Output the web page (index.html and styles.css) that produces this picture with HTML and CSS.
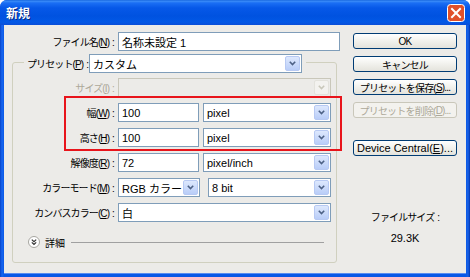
FILE: index.html
```html
<!doctype html>
<html>
  <head>
    <meta charset="utf-8">
    <title>新規</title>
    <link rel="stylesheet" href="styles.css">
  </head>
  <body>
    <div class="window">
      <div class="titlebar">
        <span class="title">新規</span>
        <span class="close">
          <svg width="18" height="18" viewBox="0 0 18 18">
            <rect x="0.5" y="0.5" width="17" height="17" rx="3" fill="#e0502a" stroke="#fff"/>
            <path d="M5 5l8 8M13 5l-8 8" stroke="#fff" stroke-width="2" stroke-linecap="square"/>
          </svg>
        </span>
      </div>
      <div class="client">
        <div class="form">
          <div class="row">
            <span class="label">ファイル名(<u>N</u>)<span class="colon">:</span></span>
            <div class="field w-name">名称未設定 1</div>
          </div>
          <div class="group">
            <div class="group-head">
              <span class="head-label">プリセット(<u>P</u>)<span class="colon">:</span></span>
              <div class="combo w-preset"><span class="value">カスタム</span><span class="arrow"><svg width="7" height="5" viewBox="0 0 7 5"><path d="M0.8 0.8l2.7 2.7 2.7-2.7" fill="none" stroke="#4d6185" stroke-width="1.6"/></svg></span></div>
            </div>
            <div class="row first">
              <span class="label disabled">サイズ(<u>I</u>)<span class="colon">:</span></span>
              <div class="combo combo-off w-full"><span class="value"></span><span class="arrow"><svg width="7" height="5" viewBox="0 0 7 5"><path d="M0.8 0.8l2.7 2.7 2.7-2.7" fill="none" stroke="#c9c7ba" stroke-width="1.6"/></svg></span></div>
            </div>
            <div class="row">
              <span class="label">幅(<u>W</u>)<span class="colon">:</span></span>
              <div class="field w-num">100</div>
              <div class="combo w-unit"><span class="value">pixel</span><span class="arrow"><svg width="7" height="5" viewBox="0 0 7 5"><path d="M0.8 0.8l2.7 2.7 2.7-2.7" fill="none" stroke="#4d6185" stroke-width="1.6"/></svg></span></div>
            </div>
            <div class="row">
              <span class="label">高さ(<u>H</u>)<span class="colon">:</span></span>
              <div class="field w-num">100</div>
              <div class="combo w-unit"><span class="value">pixel</span><span class="arrow"><svg width="7" height="5" viewBox="0 0 7 5"><path d="M0.8 0.8l2.7 2.7 2.7-2.7" fill="none" stroke="#4d6185" stroke-width="1.6"/></svg></span></div>
            </div>
            <div class="row">
              <span class="label">解像度(<u>R</u>)<span class="colon">:</span></span>
              <div class="field w-num">72</div>
              <div class="combo w-unit"><span class="value">pixel/inch</span><span class="arrow"><svg width="7" height="5" viewBox="0 0 7 5"><path d="M0.8 0.8l2.7 2.7 2.7-2.7" fill="none" stroke="#4d6185" stroke-width="1.6"/></svg></span></div>
            </div>
            <div class="row">
              <span class="label">カラーモード(<u>M</u>)<span class="colon">:</span></span>
              <div class="combo w-mode"><span class="value">RGB カラー</span><span class="arrow"><svg width="7" height="5" viewBox="0 0 7 5"><path d="M0.8 0.8l2.7 2.7 2.7-2.7" fill="none" stroke="#4d6185" stroke-width="1.6"/></svg></span></div>
              <div class="combo w-bit"><span class="value">8 bit</span><span class="arrow"><svg width="7" height="5" viewBox="0 0 7 5"><path d="M0.8 0.8l2.7 2.7 2.7-2.7" fill="none" stroke="#4d6185" stroke-width="1.6"/></svg></span></div>
            </div>
            <div class="row">
              <span class="label">カンバスカラー(<u>C</u>)<span class="colon">:</span></span>
              <div class="combo w-full"><span class="value">白</span><span class="arrow"><svg width="7" height="5" viewBox="0 0 7 5"><path d="M0.8 0.8l2.7 2.7 2.7-2.7" fill="none" stroke="#4d6185" stroke-width="1.6"/></svg></span></div>
            </div>
            <div class="detail">
              <svg class="toggle" width="12" height="12" viewBox="0 0 12 12">
                <circle cx="6" cy="6" r="5.5" fill="#fff" stroke="#a7a6a0"/>
                <path d="M3.8 3.6l2.2 2 2.2-2M3.8 6.4l2.2 2 2.2-2" fill="none" stroke="#333" stroke-width="1.2"/>
              </svg>
              <span class="detail-text">詳細</span>
              <span class="rule"></span>
            </div>
          </div>
        </div>
        <div class="side">
          <div class="btn">OK</div>
          <div class="btn">キャンセル</div>
          <div class="btn">プリセットを保存(<u>S</u>)...</div>
          <div class="btn btn-off">プリセットを削除(<u>D</u>)...</div>
          <div class="btn btn-dc">Device Central(<u>E</u>)...</div>
          <div class="size-label">ファイルサイズ<span class="colon">:</span></div>
          <div class="size-value">29.3K</div>
        </div>
      </div>
      <div class="highlight"></div>
    </div>
  </body>
</html>
```

FILE: styles.css
```css
html, body {
  margin: 0;
}
body {
  width: 470px;
  height: 277px;
  overflow: hidden;
  font: 11px "Liberation Sans", "Noto Sans CJK JP", sans-serif;
  color: #000;
}
u {
  text-decoration: underline;
  text-underline-offset: 1px;
}
.window {
  position: relative;
  width: 470px;
  height: 277px;
  display: flex;
  flex-direction: column;
  background: linear-gradient(to right, #0842c8, #1766f0 2px, #0a58e6 4px, #0a58e6 466px, #1a62e6 468px, #0034b0);
  border-radius: 7px 7px 0 0;
  overflow: hidden;
}
.titlebar {
  height: 25px;
  flex: none;
  display: flex;
  align-items: center;
  justify-content: space-between;
  padding: 0 5px 0 6px;
  background: linear-gradient(#0a5ad8 0, #3d8ef8 1px, #1a6ef4 3px, #0658e8 8px, #0052e0 16px, #0258e6 22px, #0a4ed8 25px);
}
.title {
  color: #fff;
  font: bold 12px "Noto Sans CJK JP", sans-serif;
  text-shadow: 1px 1px #0a2a80;
}
.close {
  display: flex;
}
.client {
  flex: 1;
  display: flex;
  margin: 0 4px 4px;
  padding-top: 7px;
  background: #ecebe8;
  box-shadow: 0 1px #5a8cf0;
}
.form {
  width: 341px;
}
.row {
  display: flex;
  align-items: center;
  height: 19px;
  margin-top: 6px;
}
.form > .row {
  margin-top: 0;
}
.label, .head-label, .detail-text, .size-label {
  font-size: 10px;
  letter-spacing: -0.9px;
  white-space: nowrap;
}
.colon {
  margin-left: 3px;
}
.label {
  width: 114px;
  box-sizing: border-box;
  padding-right: 4px;
  text-align: right;
}
.group .label {
  width: 105px;
}
.disabled {
  color: #aca899;
}
.field, .combo {
  height: 19px;
  box-sizing: border-box;
  border: 1px solid #7f9db9;
  background: #fff;
  display: flex;
  align-items: center;
  padding-left: 3px;
  white-space: nowrap;
}
.combo {
  padding: 1px 1px 1px 3px;
  align-items: stretch;
}
.combo .value {
  flex: 1;
  display: flex;
  align-items: center;
}
.combo .arrow {
  width: 13px;
  display: flex;
  align-items: center;
  justify-content: center;
  border: 1px solid #b7c9f3;
  border-radius: 2px;
  background: linear-gradient(#dde8fd, #b9cdf8);
}
.combo-off {
  background: #ecebe8;
  border-color: #c9c7ba;
}
.combo-off .arrow {
  background: #f3f2ef;
  border-color: #e3e2dc;
}
.w-name {
  width: 222px;
}
.w-preset {
  width: 213px;
  margin-left: 3px;
}
.w-full {
  width: 213px;
}
.w-num {
  width: 81px;
}
.w-unit {
  width: 128px;
  margin-left: 4px;
}
.w-mode {
  width: 82px;
}
.w-bit {
  width: 123px;
  margin-left: 8px;
}
.group {
  width: 325px;
  height: 201px;
  box-sizing: border-box;
  margin: 11px 0 0 8px;
  border: 1px solid #d0d0bf;
  border-radius: 3px;
}
.group-head {
  display: flex;
  align-items: center;
  width: fit-content;
  height: 19px;
  margin: -9px 0 0 11px;
  padding: 0 4px 0 3px;
  background: #ecebe8;
}
.head-label {
  width: 59px;
}
.group .first {
  margin-top: 5px;
}
.detail {
  display: flex;
  align-items: center;
  height: 18px;
  margin-top: 11px;
  padding: 0 12px 0 15px;
}
.detail-text {
  margin-left: 5px;
  letter-spacing: 0;
}
.rule {
  flex: 1;
  height: 1px;
  margin-left: 6px;
  background: #a0a0a0;
}
.side {
  width: 104px;
  margin-left: 8px;
  padding-top: 1px;
  display: flex;
  flex-direction: column;
}
.btn {
  height: 16px;
  box-sizing: border-box;
  margin-bottom: 7px;
  border: 1px solid #003c74;
  border-radius: 3px;
  background: linear-gradient(#fff, #f4f4f0 40%, #e4e3dc);
  display: flex;
  align-items: center;
  justify-content: center;
  white-space: nowrap;
  font-size: 10px;
  letter-spacing: -0.8px;
}
.btn-off {
  color: #aca899;
  border-color: #c9c7ba;
  background: #f3f2ee;
}
.btn-dc {
  margin-top: 15px;
  font-size: 11px;
  letter-spacing: 0;
}
.size-label, .size-value {
  text-align: center;
  line-height: 14px;
}
.size-label {
  margin-top: 48px;
}
.size-value {
  margin-top: 6px;
}
.highlight {
  position: absolute;
  left: 64px;
  top: 96px;
  width: 278px;
  height: 55px;
  box-sizing: border-box;
  border: 2px solid #e8141b;
  pointer-events: none;
}
```
